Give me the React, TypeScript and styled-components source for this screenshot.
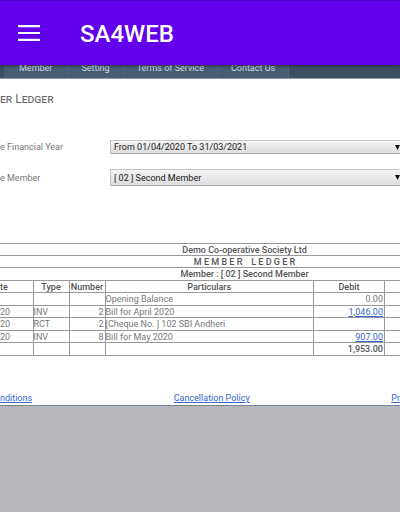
import React from "react";
import styled, { createGlobalStyle } from "styled-components";

const Global = createGlobalStyle`
  *, *::before, *::after { box-sizing: border-box; }
  body {
    margin: 0;
    background: #b5b7bc;
    font-family: Roboto, "Liberation Sans", sans-serif;
    font-size: 9px;
    color: #666;
  }
`;

const Screen = styled.div`
  overflow: hidden;
`;

const AppBar = styled.header`
  position: relative;
  z-index: 1;
  display: flex;
  align-items: center;
  gap: 40px;
  height: 65px;
  padding: 2px 18px 0;
  background: #6200ee;
  border-top: 1px solid #4c00d0;
  box-shadow: 0 1px 3px rgba(0, 0, 0, 0.5);
`;

const MenuButton = styled.button`
  display: flex;
  padding: 0 0 3px;
  border: 0;
  background: none;
  color: #fff;
`;

const AppTitle = styled.h1`
  margin: 0;
  font-size: 24px;
  line-height: 28px;
  font-weight: 500;
  color: #fff;
`;

const NavBar = styled.nav`
  display: flex;
  height: 20px;
  margin-top: -6px;
  padding-left: 4px;
  background: #3e4f63;
  border-bottom: 1px solid #8d9cab;
`;

const NavLink = styled.a<{ $pad: number }>`
  padding: 2px ${(p) => p.$pad}px 0;
  line-height: 15px;
  color: #d2dae2;
  text-decoration: none;
  white-space: nowrap;
  background: #475d73;
  border-right: 1px solid #50677d;
`;

const Page = styled.main`
  background: #fff;
  border-bottom: 1px solid #74869a;
`;

const Heading = styled.h2`
  margin: 0;
  padding: 13px 0 34px;
  font-size: 12px;
  line-height: 14px;
  font-weight: 400;
  font-variant: small-caps;
  color: #666;
`;

const Form = styled.form`
  display: grid;
  gap: 15px;
  padding-bottom: 57px;
`;

const Field = styled.div`
  display: grid;
  grid-template-columns: 110px 1fr;
  align-items: center;
  margin-right: -6px;
`;

const Label = styled.label`
  white-space: nowrap;
  color: #777;
`;

const SelectFrame = styled.div`
  display: flex;
  align-items: center;
  background: linear-gradient(#f5f5f5, #dcdcdc);
  border: 1px solid #c4c4c4;
  border-bottom-color: #aaa;
`;

const Select = styled.select<{ $tall?: boolean }>`
  flex: 1;
  min-width: 0;
  height: ${(p) => (p.$tall ? 15 : 12)}px;
  padding: 0 3px;
  border: 0;
  appearance: none;
  background: none;
  font: 9px/12px Roboto, "Liberation Sans", sans-serif;
  color: #222;
`;

const Arrow = styled.svg`
  flex: none;
  margin-right: 5px;
`;

const Ledger = styled.table`
  width: calc(100% + 90px);
  table-layout: fixed;
  border-collapse: collapse;
  border-left: hidden;
  line-height: 10px;
  white-space: nowrap;
`;

const Col = styled.col<{ $w?: number }>`
  width: ${(p) => (p.$w ? `${p.$w}px` : "auto")};
`;

const Row = styled.tr<{ $tall?: boolean }>`
  height: ${(p) => (p.$tall ? 13 : 12)}px;
`;

const Head = styled.th<{ $left?: boolean }>`
  padding: 0;
  border: 1px solid #999;
  text-align: ${(p) => (p.$left ? "left" : "center")};
  font-weight: 500;
  color: #555;
  white-space: pre;
`;

const Cell = styled.td<{ $right?: boolean; $strong?: boolean }>`
  padding: 0 1px 0 0;
  border: 1px solid #999;
  text-align: ${(p) => (p.$right ? "right" : "left")};
  font-weight: ${(p) => (p.$strong ? 500 : 400)};
  color: ${(p) => (p.$strong ? "#555" : "#777")};
`;

const Link = styled.a`
  color: #3366cc;
  text-decoration: underline;
`;

const Footer = styled.footer`
  display: flex;
  justify-content: space-between;
  padding: 36px 0 1px;
  line-height: 12px;
`;

const nav = [
  { text: "Member", pad: 15 },
  { text: "Setting", pad: 13 },
  { text: "Terms of Service", pad: 13 },
  { text: "Contact Us", pad: 13 },
];

const rows = [
  { date: "", type: "", number: "", text: "Opening Balance", debit: "0.00" },
  { date: "20", type: "INV", number: "2", text: "Bill for April 2020", debit: "1,046.00", link: true },
  { date: "20", type: "RCT", number: "2", text: "[Cheque No. ] 102 SBI Andheri", debit: "" },
  { date: "20", type: "INV", number: "8", text: "Bill for May 2020", debit: "907.00", link: true },
];

function DropDown({ id, value, tall }: { id: string; value: string; tall?: boolean }) {
  return (
    <SelectFrame>
      <Select id={id} $tall={tall}>
        <option>{value}</option>
      </Select>
      <Arrow width="5" height="5" viewBox="0 0 5 5" aria-hidden="true">
        <path d="M0 0h5L2.5 5z" fill="#111" />
      </Arrow>
    </SelectFrame>
  );
}

export default function App() {
  return (
    <Screen>
      <Global />
      <AppBar>
        <MenuButton type="button" aria-label="Menu">
          <svg width="22" height="16" viewBox="0 0 22 16" aria-hidden="true">
            <path d="M0 1.2h22M0 8h22M0 14.8h22" stroke="currentColor" strokeWidth="2.2" />
          </svg>
        </MenuButton>
        <AppTitle>SA4WEB</AppTitle>
      </AppBar>
      <NavBar>
        {nav.map((n) => (
          <NavLink key={n.text} href="#" $pad={n.pad}>
            {n.text}
          </NavLink>
        ))}
      </NavBar>
      <Page>
        <Heading>er Ledger</Heading>
        <Form>
          <Field>
            <Label htmlFor="year">e Financial Year</Label>
            <DropDown id="year" value="From 01/04/2020 To 31/03/2021" />
          </Field>
          <Field>
            <Label htmlFor="member">e Member</Label>
            <DropDown id="member" value="[ 02 ] Second Member" tall />
          </Field>
        </Form>
        <Ledger>
          <colgroup>
            <Col $w={33} />
            <Col $w={36} />
            <Col $w={36} />
            <Col />
            <Col $w={71} />
            <Col $w={105} />
          </colgroup>
          <thead>
            <Row>
              <Head colSpan={6}>Demo Co-operative Society Ltd</Head>
            </Row>
            <Row>
              <Head colSpan={6}>{"M E M B E R    L E D G E R"}</Head>
            </Row>
            <Row $tall>
              <Head colSpan={6}>Member : [ 02 ] Second Member</Head>
            </Row>
            <Row>
              <Head $left>te</Head>
              <Head>Type</Head>
              <Head>Number</Head>
              <Head>Particulars</Head>
              <Head>Debit</Head>
              <Head />
            </Row>
          </thead>
          <tbody>
            {rows.map((r, i) => (
              <Row key={r.text} $tall={i % 2 === 0}>
                <Cell>{r.date}</Cell>
                <Cell>{r.type}</Cell>
                <Cell $right>{r.number}</Cell>
                <Cell>{r.text}</Cell>
                <Cell $right>{r.link ? <Link href="#">{r.debit}</Link> : r.debit}</Cell>
                <Cell />
              </Row>
            ))}
            <Row $tall>
              <Cell />
              <Cell />
              <Cell />
              <Cell />
              <Cell $right $strong>1,953.00</Cell>
              <Cell />
            </Row>
          </tbody>
        </Ledger>
        <Footer>
          <Link href="#">nditions</Link>
          <Link href="#">Cancellation Policy</Link>
          <Link href="#">Pr</Link>
        </Footer>
      </Page>
    </Screen>
  );
}
